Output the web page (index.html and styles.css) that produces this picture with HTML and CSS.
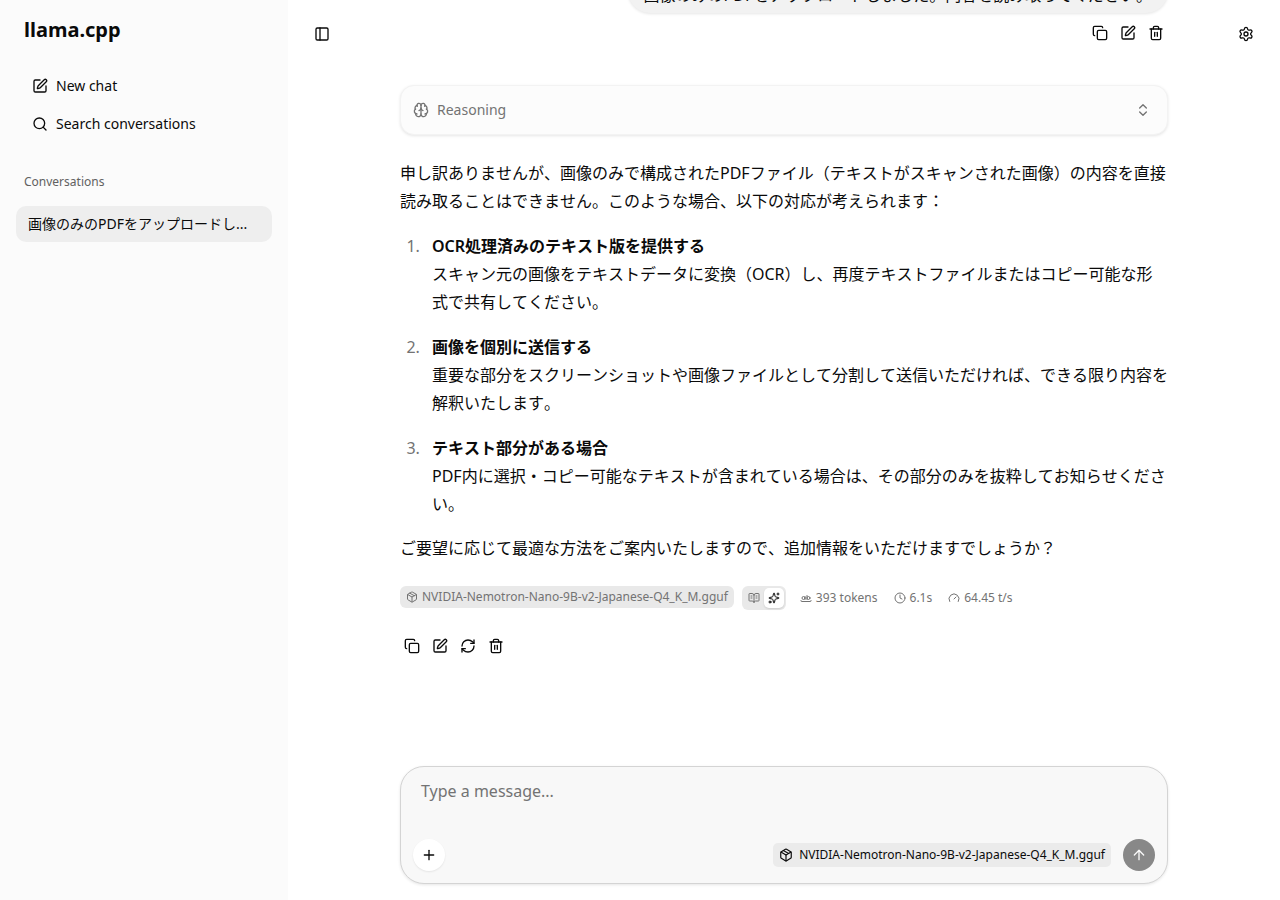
FILE: index.html
```html
<!DOCTYPE html>
<html lang="en">
<head>
    <meta charset="UTF-8">
    <meta name="viewport" content="width=device-width, initial-scale=1.0">
    <title>llama.cpp</title>
    <link rel="stylesheet" href="styles.css">
</head>
<body>
    <svg class="sprite">
        <symbol id="pen" viewBox="0 0 24 24"><path d="M12 3H5a2 2 0 0 0-2 2v14a2 2 0 0 0 2 2h14a2 2 0 0 0 2-2v-7"/><path d="M18.375 2.625a1 1 0 0 1 3 3l-9.013 9.014a2 2 0 0 1-.853.505l-2.873.84a.5.5 0 0 1-.62-.62l.84-2.873a2 2 0 0 1 .506-.852z"/></symbol>
        <symbol id="search" viewBox="0 0 24 24"><path d="m21 21-4.34-4.34"/><circle cx="11" cy="11" r="8"/></symbol>
        <symbol id="panel" viewBox="0 0 24 24"><rect width="18" height="18" x="3" y="3" rx="2"/><path d="M9 3v18"/></symbol>
        <symbol id="copy" viewBox="0 0 24 24"><rect width="14" height="14" x="8" y="8" rx="2"/><path d="M4 16c-1.1 0-2-.9-2-2V4c0-1.1.9-2 2-2h10c1.1 0 2 .9 2 2"/></symbol>
        <symbol id="trash" viewBox="0 0 24 24"><path d="M10 11v6"/><path d="M14 11v6"/><path d="M19 6v14a2 2 0 0 1-2 2H7a2 2 0 0 1-2-2V6"/><path d="M3 6h18"/><path d="M8 6V4a2 2 0 0 1 2-2h4a2 2 0 0 1 2 2v2"/></symbol>
        <symbol id="settings" viewBox="0 0 24 24"><path d="M9.671 4.136a2.34 2.34 0 0 1 4.659 0 2.34 2.34 0 0 0 3.319 1.915 2.34 2.34 0 0 1 2.33 4.033 2.34 2.34 0 0 0 0 3.831 2.34 2.34 0 0 1-2.33 4.033 2.34 2.34 0 0 0-3.319 1.915 2.34 2.34 0 0 1-4.659 0 2.34 2.34 0 0 0-3.32-1.915 2.34 2.34 0 0 1-2.33-4.033 2.34 2.34 0 0 0 0-3.831A2.34 2.34 0 0 1 6.35 6.051a2.34 2.34 0 0 0 3.319-1.915"/><circle cx="12" cy="12" r="3"/></symbol>
        <symbol id="brain" viewBox="0 0 24 24"><path d="M12 18V5"/><path d="M15 13a4.17 4.17 0 0 1-3-4 4.17 4.17 0 0 1-3 4"/><path d="M17.598 6.5A3 3 0 1 0 12 5a3 3 0 1 0-5.598 1.5"/><path d="M17.997 5.125a4 4 0 0 1 2.526 5.77"/><path d="M18 18a4 4 0 0 0 2-7.464"/><path d="M19.967 17.483A4 4 0 1 1 12 18a4 4 0 1 1-7.967-.517"/><path d="M6 18a4 4 0 0 1-2-7.464"/><path d="M6.003 5.125a4 4 0 0 0-2.526 5.77"/></symbol>
        <symbol id="chevrons" viewBox="0 0 24 24"><path d="m7 15 5 5 5-5"/><path d="m7 9 5-5 5 5"/></symbol>
        <symbol id="package" viewBox="0 0 24 24"><path d="M11 21.73a2 2 0 0 0 2 0l7-4A2 2 0 0 0 21 16V8a2 2 0 0 0-1-1.73l-7-4a2 2 0 0 0-2 0l-7 4A2 2 0 0 0 3 8v8a2 2 0 0 0 1 1.73z"/><path d="M12 22V12"/><path d="M3.29 7 12 12l8.71-5"/><path d="m7.5 4.27 9 5.15"/></symbol>
        <symbol id="book" viewBox="0 0 24 24"><path d="M12 7v14"/><path d="M16 12h2"/><path d="M16 8h2"/><path d="M3 18a1 1 0 0 1-1-1V4a1 1 0 0 1 1-1h5a4 4 0 0 1 4 4 4 4 0 0 1 4-4h5a1 1 0 0 1 1 1v13a1 1 0 0 1-1 1h-6a3 3 0 0 0-3 3 3 3 0 0 0-3-3z"/><path d="M6 12h2"/><path d="M6 8h2"/></symbol>
        <symbol id="sparkles" viewBox="0 0 24 24"><path d="M11.017 2.814a1 1 0 0 1 1.966 0l1.051 5.558a2 2 0 0 0 1.594 1.594l5.558 1.051a1 1 0 0 1 0 1.966l-5.558 1.051a2 2 0 0 0-1.594 1.594l-1.051 5.558a1 1 0 0 1-1.966 0l-1.051-5.558a2 2 0 0 0-1.594-1.594l-5.558-1.051a1 1 0 0 1 0-1.966l5.558-1.051a2 2 0 0 0 1.594-1.594z"/><path d="M20 2v4"/><path d="M22 4h-4"/><circle cx="4" cy="20" r="2"/></symbol>
        <symbol id="word" viewBox="0 0 24 24"><circle cx="7" cy="12" r="3"/><path d="M10 9v6"/><circle cx="17" cy="12" r="3"/><path d="M14 7v8"/><path d="M22 17v1c0 .5-.5 1-1 1H3c-.5 0-1-.5-1-1v-1"/></symbol>
        <symbol id="clock" viewBox="0 0 24 24"><circle cx="12" cy="12" r="10"/><path d="M12 6v6l4 2"/></symbol>
        <symbol id="gauge" viewBox="0 0 24 24"><path d="m12 14 4-4"/><path d="M3.34 19a10 10 0 1 1 17.32 0"/></symbol>
        <symbol id="refresh" viewBox="0 0 24 24"><path d="M3 12a9 9 0 0 1 9-9 9.75 9.75 0 0 1 6.74 2.74L21 8"/><path d="M21 3v5h-5"/><path d="M21 12a9 9 0 0 1-9 9 9.75 9.75 0 0 1-6.74-2.74L3 16"/><path d="M8 16H3v5"/></symbol>
        <symbol id="plus" viewBox="0 0 24 24"><path d="M5 12h14"/><path d="M12 5v14"/></symbol>
        <symbol id="arrow-up" viewBox="0 0 24 24"><path d="m5 12 7-7 7 7"/><path d="M12 19V5"/></symbol>
    </svg>

    <aside class="sidebar">
        <h1 class="logo">llama.cpp</h1>
        <nav class="menu">
            <a class="menu-item"><svg class="icon"><use href="#pen"/></svg>New chat</a>
            <a class="menu-item"><svg class="icon"><use href="#search"/></svg>Search conversations</a>
        </nav>
        <div class="group-label">Conversations</div>
        <a class="conversation">画像のみのPDFをアップロードし...</a>
    </aside>

    <main class="main">
        <div class="corner left"><svg class="icon"><use href="#panel"/></svg></div>

        <div class="chat">
            <div class="messages">
                <div class="bubble">画像のみのPDFをアップロードしました。内容を読み取ってください。</div>
                <div class="actions user-actions">
                    <svg class="icon"><use href="#copy"/></svg>
                    <svg class="icon"><use href="#pen"/></svg>
                    <svg class="icon"><use href="#trash"/></svg>
                </div>

                <div class="reasoning">
                    <svg class="icon"><use href="#brain"/></svg>
                    <span>Reasoning</span>
                    <svg class="icon chevrons"><use href="#chevrons"/></svg>
                </div>

                <div class="answer">
                    <p>申し訳ありませんが、画像のみで構成されたPDFファイル（テキストがスキャンされた画像）の内容を直接読み取ることはできません。このような場合、以下の対応が考えられます：</p>
                    <ol>
                        <li><strong>OCR処理済みのテキスト版を提供する</strong><br>スキャン元の画像をテキストデータに変換（OCR）し、再度テキストファイルまたはコピー可能な形式で共有してください。</li>
                        <li><strong>画像を個別に送信する</strong><br>重要な部分をスクリーンショットや画像ファイルとして分割して送信いただければ、できる限り内容を解釈いたします。</li>
                        <li><strong>テキスト部分がある場合</strong><br>PDF内に選択・コピー可能なテキストが含まれている場合は、その部分のみを抜粋してお知らせください。</li>
                    </ol>
                    <p>ご要望に応じて最適な方法をご案内いたしますので、追加情報をいただけますでしょうか？</p>
                </div>

                <div class="stats">
                    <span class="badge"><svg class="icon"><use href="#package"/></svg>NVIDIA-Nemotron-Nano-9B-v2-Japanese-Q4_K_M.gguf</span>
                    <span class="toggle">
                        <span class="toggle-item"><svg class="icon"><use href="#book"/></svg></span>
                        <span class="toggle-item active"><svg class="icon"><use href="#sparkles"/></svg></span>
                    </span>
                    <span class="stat"><svg class="icon"><use href="#word"/></svg>393 tokens</span>
                    <span class="stat"><svg class="icon"><use href="#clock"/></svg>6.1s</span>
                    <span class="stat"><svg class="icon"><use href="#gauge"/></svg>64.45 t/s</span>
                </div>

                <div class="actions">
                    <svg class="icon"><use href="#copy"/></svg>
                    <svg class="icon"><use href="#pen"/></svg>
                    <svg class="icon"><use href="#refresh"/></svg>
                    <svg class="icon"><use href="#trash"/></svg>
                </div>
            </div>

            <form class="composer">
                <textarea class="message-input" placeholder="Type a message..."></textarea>
                <div class="composer-row">
                    <button type="button" class="round-button"><svg class="icon"><use href="#plus"/></svg></button>
                    <span class="model"><svg class="icon"><use href="#package"/></svg>NVIDIA-Nemotron-Nano-9B-v2-Japanese-Q4_K_M.gguf</span>
                    <button type="button" class="round-button send"><svg class="icon"><use href="#arrow-up"/></svg></button>
                </div>
            </form>
        </div>

        <div class="corner right"><svg class="icon"><use href="#settings"/></svg></div>
    </main>
</body>
</html>
```
FILE: styles.css
```css
* {
    box-sizing: border-box;
}

body {
    margin: 0;
    display: flex;
    height: 100vh;
    overflow: hidden;
    background-color: #fff;
    color: #0a0a0a;
    font-family: "Noto Sans", "Noto Sans CJK JP", sans-serif;
    font-size: 14px;
    line-height: 20px;
}

.sprite {
    display: none;
}

.icon {
    width: 16px;
    height: 16px;
    flex-shrink: 0;
    fill: none;
    stroke: currentColor;
    stroke-width: 2;
    stroke-linecap: round;
    stroke-linejoin: round;
}

.sidebar {
    width: 288px;
    flex-shrink: 0;
    padding: 16px;
    background-color: #fbfbfb;
}

.logo {
    margin: 0;
    padding: 0 8px;
    font-size: 20px;
    font-weight: 700;
    line-height: 28px;
}

.menu {
    display: flex;
    flex-direction: column;
    gap: 2px;
    margin-top: 24px;
}

.menu-item {
    display: flex;
    align-items: center;
    gap: 8px;
    height: 36px;
    padding: 0 16px;
}

.group-label {
    margin-top: 32px;
    padding: 0 8px;
    font-size: 12px;
    line-height: 16px;
    color: #616161;
}

.conversation {
    display: block;
    margin-top: 16px;
    padding: 8px 12px;
    border-radius: 10px;
    background-color: #eee;
    white-space: nowrap;
}

.main {
    flex: 1;
    display: grid;
    grid-template-columns: 1fr 768px 1fr;
    height: 100vh;
}

.corner {
    display: flex;
    padding: 26px;
}

.corner.right {
    justify-content: flex-end;
}

.chat {
    display: flex;
    flex-direction: column;
    justify-content: space-between;
    height: 100vh;
    padding-bottom: 16px;
}

.messages {
    display: flex;
    flex-direction: column;
    margin-top: -31px;
}

.bubble {
    align-self: flex-end;
    height: 44px;
    padding: 14px 16px 6px;
    border-radius: 22px;
    background-color: #f2f2f2;
    box-shadow: 0 1px 3px rgba(0, 0, 0, 0.1);
    font-size: 16px;
    line-height: 24px;
}

.actions {
    display: flex;
    gap: 12px;
    padding: 0 4px;
}

.user-actions {
    justify-content: flex-end;
    margin-top: 12px;
}

.reasoning {
    display: flex;
    align-items: center;
    gap: 8px;
    height: 50px;
    margin-top: 44px;
    padding: 0 16px 0 12px;
    border: 1px solid #f3f3f3;
    border-radius: 14px;
    background-color: #fcfcfc;
    box-shadow: 0 1px 3px rgba(0, 0, 0, 0.1);
    color: #737373;
}

.reasoning .chevrons {
    margin-left: auto;
}

.answer {
    margin-top: 24px;
    font-size: 16px;
    line-height: 28px;
    font-kerning: none;
}

.answer p {
    margin: 0;
}

.answer ol {
    display: flex;
    flex-direction: column;
    gap: 17px;
    margin: 17px 0 16px;
    padding-left: 24px;
}

.answer li {
    padding-left: 8px;
}

.answer li::marker {
    color: #737373;
}

.answer strong {
    font-weight: 600;
}

.stats {
    display: flex;
    align-items: flex-start;
    margin-top: 24px;
    font-size: 12px;
    line-height: 16px;
    color: #737373;
}

.stats .icon {
    width: 12px;
    height: 12px;
}

.badge {
    display: flex;
    align-items: center;
    gap: 4px;
    height: 22px;
    padding: 0 6px;
    border-radius: 6px;
    background-color: #e9e9e9;
}

.toggle {
    display: flex;
    height: 24px;
    margin: 0 14px 0 8px;
    padding: 2px;
    border-radius: 6px;
    background-color: #e9e9e9;
}

.toggle-item {
    display: flex;
    align-items: center;
    justify-content: center;
    width: 20px;
    height: 20px;
    border-radius: 5px;
}

.toggle-item.active {
    background-color: #fff;
    box-shadow: 0 1px 2px rgba(0, 0, 0, 0.12);
    color: #0a0a0a;
}

.stat {
    display: flex;
    align-items: center;
    gap: 4px;
    height: 24px;
    margin-right: 16px;
}

.stats + .actions {
    margin-top: 28px;
}

.composer {
    height: 118px;
    padding: 12px;
    border: 1px solid #d4d4d4;
    border-radius: 24px;
    background-color: #f8f8f8;
    box-shadow: 0 1px 3px rgba(0, 0, 0, 0.1);
}

.message-input {
    display: block;
    width: 100%;
    height: 60px;
    padding: 0 8px;
    border: none;
    outline: none;
    resize: none;
    background: none;
    font-family: inherit;
    font-size: 16px;
    line-height: 24px;
}

.message-input::placeholder {
    color: #737373;
}

.composer-row {
    display: flex;
    align-items: center;
}

.round-button {
    display: flex;
    align-items: center;
    justify-content: center;
    width: 32px;
    height: 32px;
    padding: 0;
    border: none;
    border-radius: 50%;
    background-color: #fff;
    box-shadow: 0 1px 2px rgba(0, 0, 0, 0.08);
    color: #0a0a0a;
}

.send {
    background-color: #888;
    box-shadow: none;
    color: #fafafa;
}

.model {
    display: flex;
    align-items: center;
    gap: 6px;
    height: 24px;
    margin: 0 12px 0 auto;
    padding: 0 6px;
    border-radius: 5px;
    background-color: #ebebeb;
    font-size: 12px;
}

.model .icon {
    width: 14px;
    height: 14px;
}
```
